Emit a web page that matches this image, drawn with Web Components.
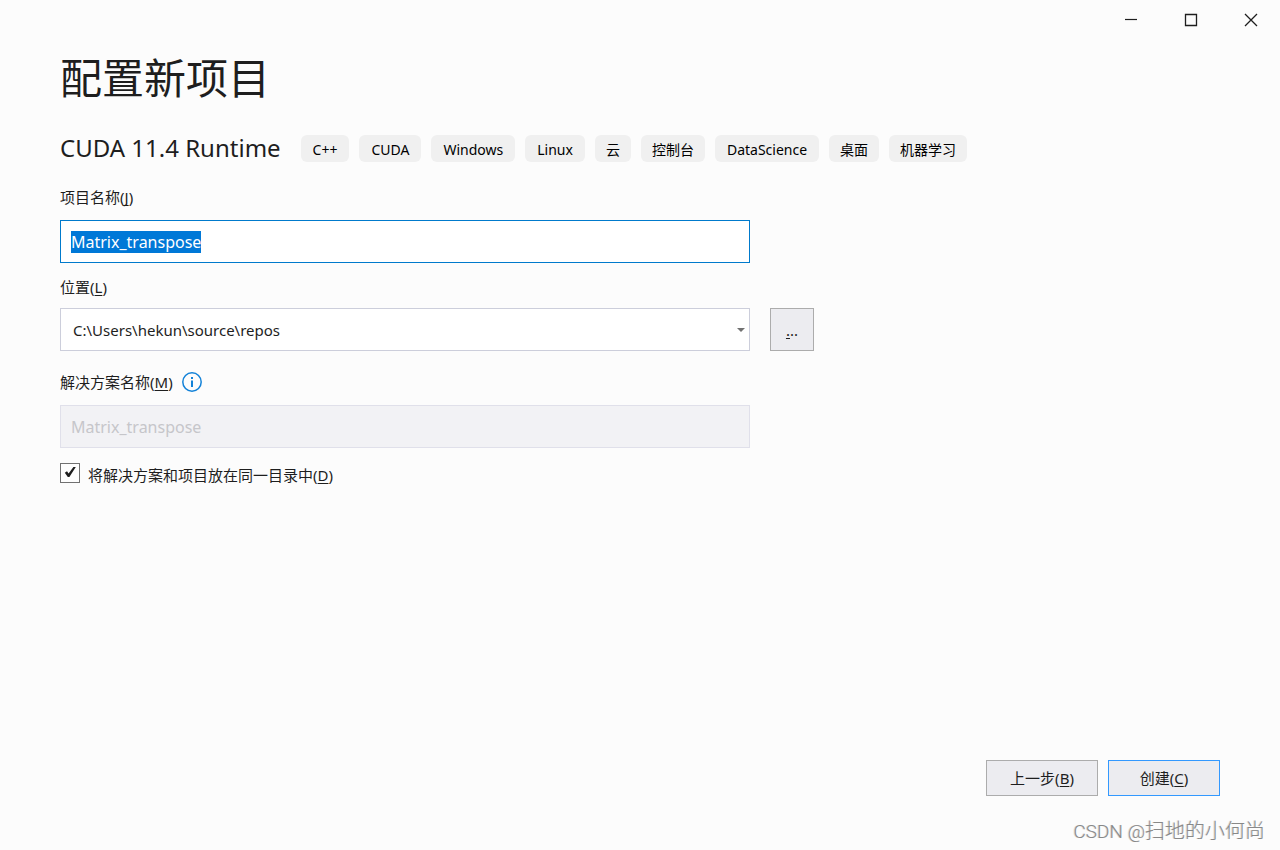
<!DOCTYPE html>
<html lang="zh-CN">
<head>
<meta charset="utf-8">
<title>配置新项目</title>
<style>
  html, body { margin: 0; }
  body {
    background: #fcfcfc;
    color: #1e1e1e;
    font-family: "Noto Sans", "Noto Sans CJK SC", sans-serif;
    font-size: 15px;
    line-height: 22px;
  }
</style>
</head>
<body>
<project-window></project-window>

<script>
const define = (name, html, setup) => {
  const template = document.createElement('template');
  template.innerHTML = html.trim();
  customElements.define(name, class extends HTMLElement {
    connectedCallback() {
      if (this.shadowRoot) return;
      const root = this.attachShadow({ mode: 'open' });
      root.append(template.content.cloneNode(true));
      if (setup) setup(root, this);
    }
  });
};

// Underlined keyboard mnemonic in brackets
define('access-key', `
  <style>
    :host { display: inline; }
    u { text-decoration: underline 1px; text-underline-offset: 2px; text-decoration-skip-ink: none; }
  </style>(<u><slot></slot></u>)`);

define('caption-bar', `
  <style>
    :host { display: flex; justify-content: flex-end; gap: 2px; height: 40px; }
    button { width: 58px; padding: 0; border: 0; background: none; color: #1e1e1e; display: grid; place-items: center; }
    svg { display: block; fill: none; stroke: currentColor; }
  </style>
  <button aria-label="最小化"><svg width="14" height="14"><path d="M1 6.5h12" stroke-width="1.2"/></svg></button>
  <button aria-label="最大化"><svg width="14" height="14"><path d="M1.5 1.5h11v11h-11z" stroke-width="1.3"/></svg></button>
  <button aria-label="关闭"><svg width="14" height="14"><path d="M1 1l12 12M13 1L1 13" stroke-width="1.3"/></svg></button>`);

define('tag-chip', `
  <style>
    :host { display: block; padding: 2px 11px 0; border-radius: 6px; background: #f0f0f0; color: #000; font-size: 14px; line-height: 25px; white-space: nowrap; }
    :host([lang="en"]) { padding: 2px 12px 0; }
  </style><slot></slot>`);

define('form-field', `
  <style>
    :host { display: flex; flex-direction: column; gap: 12px; }
    .caption { display: flex; align-items: center; gap: 9px; line-height: 22px; }
    input {
      box-sizing: border-box; width: 100%; height: 43px; padding: 0 10px; margin: 0;
      border: 1px solid #007acc; border-radius: 0; outline: 0; background: #fff;
      color: #1e1e1e; font: inherit; font-size: 16px;
    }
    input::selection { background: #0078d7; color: #fff; }
    input:disabled { background: #f2f2f5; border-color: #e0e0ea; color: #c6c6ca; }
  </style>
  <div class="caption"><label for="box"><slot></slot></label><slot name="hint"></slot></div>
  <input id="box" type="text" spellcheck="false">`,
  (root, host) => {
    const box = root.getElementById('box');
    box.value = host.getAttribute('value');
    box.disabled = host.hasAttribute('disabled');
    if (host.hasAttribute('active')) { box.focus(); box.select(); }
  });

define('path-field', `
  <style>
    :host { display: flex; flex-direction: column; gap: 10px; }
    .combo { display: grid; align-items: center; }
    select, svg { grid-area: 1 / 1; }
    select {
      appearance: none; box-sizing: border-box; width: 100%; height: 43px; margin: 0; padding: 0 24px 0 12px;
      border: 1px solid #cccedb; border-radius: 0; background: #fff; color: #1e1e1e;
      font: inherit;
    }
    svg { justify-self: end; margin-right: 5px; pointer-events: none; }
  </style>
  <label for="path"><slot></slot></label>
  <div class="combo">
    <select id="path"><option>C:\\Users\\hekun\\source\\repos</option></select>
    <svg width="8" height="4"><path d="M0 0h8L4 4z" fill="#717171"/></svg>
  </div>`);

define('info-icon', `
  <style>:host, svg { display: block; }</style>
  <svg width="20" height="20" viewBox="0 0 20 20" role="img" aria-label="信息">
    <circle cx="10" cy="10" r="9.2" fill="none" stroke="#1382d8" stroke-width="1.5"/>
    <path d="M9 5h2v2H9zM9 8.5h2V15H9z" fill="#1382d8"/>
  </svg>`);

define('check-option', `
  <style>
    :host { display: flex; align-items: flex-start; gap: 8px; }
    .tick { display: grid; place-items: center; flex: none; }
    input, svg { grid-area: 1 / 1; }
    input {
      appearance: none; box-sizing: border-box; width: 20px; height: 20px; margin: 0;
      border: 1px solid #717171; background: #fefefe;
    }
    svg { pointer-events: none; visibility: hidden; }
    input:checked + svg { visibility: visible; }
    label { padding-top: 1px; }
  </style>
  <div class="tick">
    <input id="check" type="checkbox" checked>
    <svg width="20" height="20"><path d="M4.8 9.8l2.2-1.6 1.6 2.4L13.4 4h2.4L9.4 14H7.8z" fill="#1e1e1e"/></svg>
  </div>
  <label for="check"><slot></slot></label>`);

define('push-button', `
  <style>
    :host { display: block; width: 112px; height: 36px; }
    :host([browse]) { width: 44px; height: 43px; }
    button {
      box-sizing: border-box; width: 100%; height: 100%; padding: 0;
      border: 1px solid #acacac; border-radius: 0; background: #ececf0; color: #1e1e1e; font: inherit;
    }
    :host([primary]) button { border-color: #3399ff; }
  </style>
  <button type="button"><slot></slot></button>`);

define('project-window', `
  <style>
    :host { display: flex; flex-direction: column; min-height: 100vh; position: relative; }
    main { flex: 1; padding: 10px 60px 0; }
    h1 { margin: 0; font-size: 42px; line-height: 56px; font-weight: 400; }
    .template { display: flex; flex-wrap: wrap; align-items: center; gap: 10px; margin-top: 26px; }
    h2 { margin: 0 10px 0 0; font-size: 24px; line-height: 32px; font-weight: 400; }
    .form { display: grid; grid-template-columns: minmax(0, 690px) auto; column-gap: 20px; justify-content: start; margin-top: 22px; }
    .form > * { grid-column: 1; }
    .form > .browse { grid-column: 2; align-self: end; }
    .place { margin-top: 13px; }
    .solution { margin-top: 20px; }
    .option { margin-top: 15px; }
    footer { display: flex; justify-content: flex-end; gap: 10px; padding: 24px 60px 54px; }
    .mark { position: absolute; right: 15px; bottom: 5px; font: 300 20px/26px "Noto Sans CJK SC", sans-serif; color: #888; text-shadow: -1px 0 0 #d8d8d8; }
    .mark span { font-family: Roboto, sans-serif; font-size: 19px; }
    u { text-decoration: underline 1px; text-underline-offset: 2px; text-decoration-skip-ink: none; }
  </style>
  <caption-bar></caption-bar>
  <main>
    <h1>配置新项目</h1>
    <div class="template">
      <h2>CUDA 11.4 Runtime</h2>
      <tag-chip lang="en">C++</tag-chip><tag-chip lang="en">CUDA</tag-chip><tag-chip lang="en">Windows</tag-chip><tag-chip lang="en">Linux</tag-chip><tag-chip>云</tag-chip><tag-chip>控制台</tag-chip><tag-chip lang="en">DataScience</tag-chip><tag-chip>桌面</tag-chip><tag-chip>机器学习</tag-chip>
    </div>
    <div class="form">
      <form-field value="Matrix_transpose" active>项目名称<access-key>J</access-key></form-field>
      <path-field class="place">位置<access-key>L</access-key></path-field>
      <push-button class="browse" browse><u>.</u>..</push-button>
      <form-field class="solution" value="Matrix_transpose" disabled>解决方案名称<access-key>M</access-key><info-icon slot="hint"></info-icon></form-field>
      <check-option class="option">将解决方案和项目放在同一目录中<access-key>D</access-key></check-option>
    </div>
  </main>
  <footer>
    <push-button>上一步<access-key>B</access-key></push-button>
    <push-button primary>创建<access-key>C</access-key></push-button>
  </footer>
  <div class="mark"><span>CSDN @</span>扫地的小何尚</div>`);
</script>
</body>
</html>
